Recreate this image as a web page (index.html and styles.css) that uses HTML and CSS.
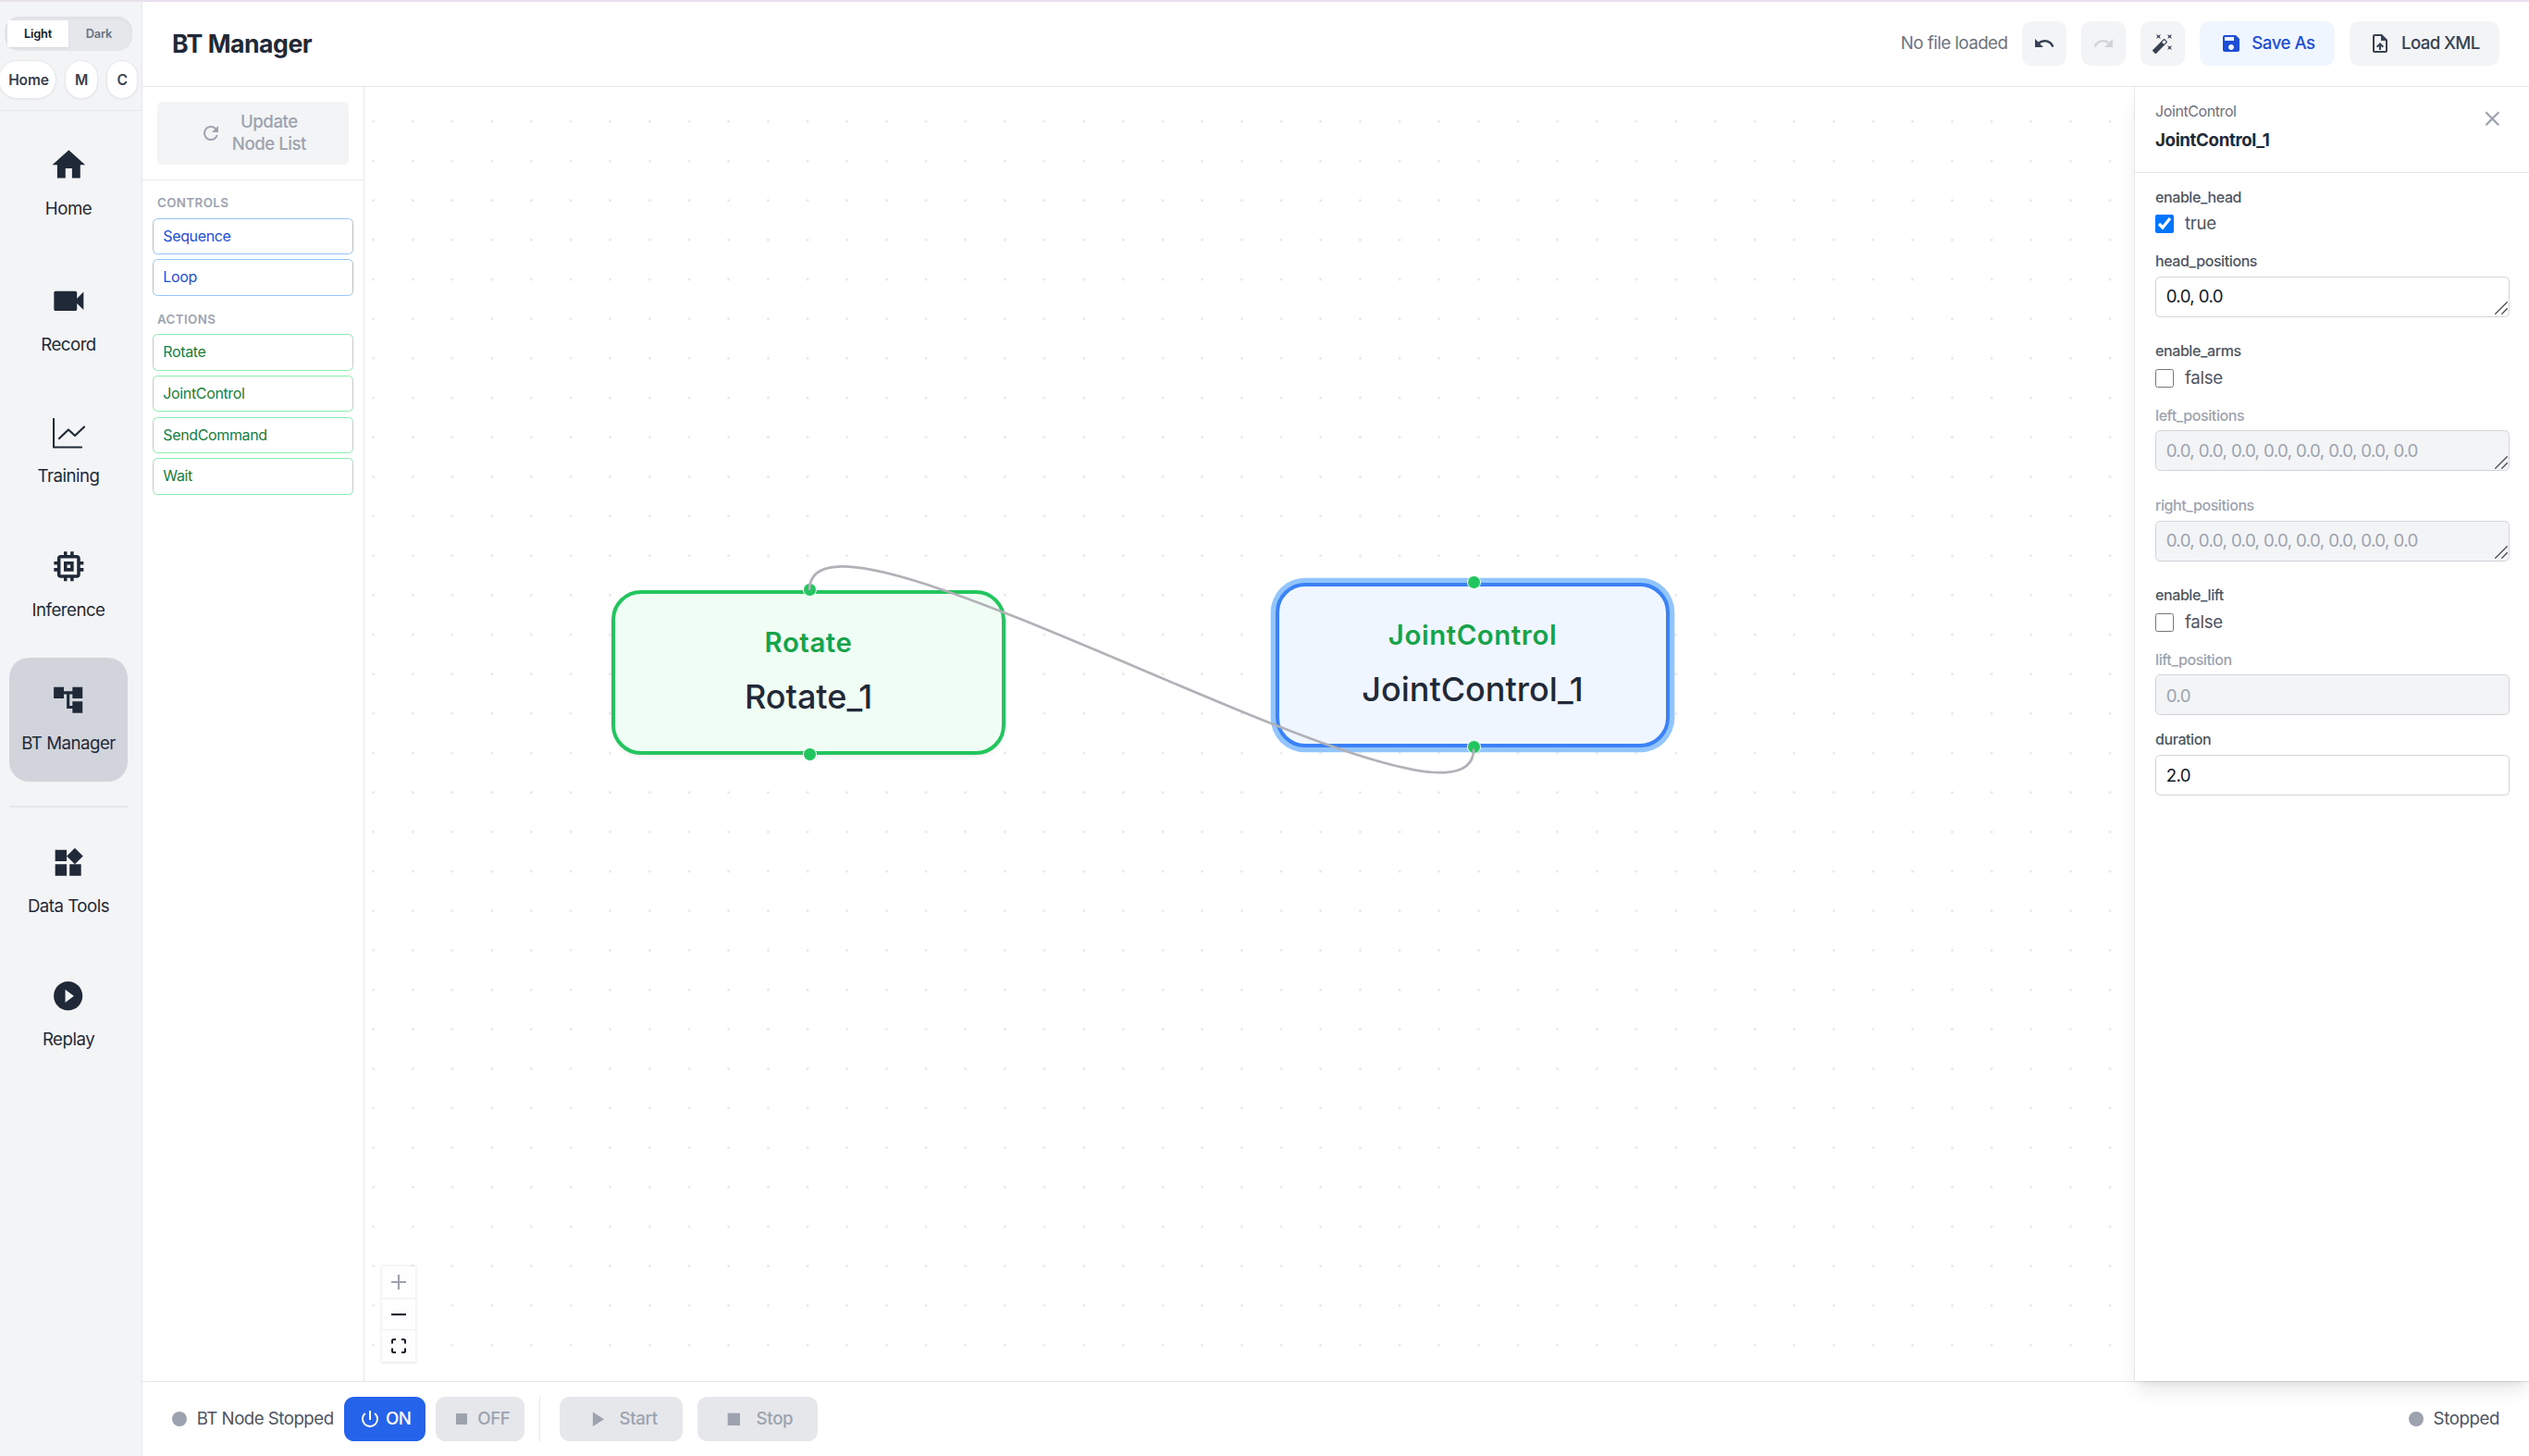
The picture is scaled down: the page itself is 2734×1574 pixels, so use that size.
FILE: index.html
```html
<!DOCTYPE html>
<html lang="en">
<head>
<meta charset="utf-8">
<title>BT Manager</title>
<link rel="stylesheet" href="styles.css">
</head>
<body>
<div class="app">
  <aside class="sidebar">
    <div class="sidebar-top">
      <div class="theme-toggle"><button class="theme-option theme-option-on">Light</button><button class="theme-option">Dark</button></div>
      <div class="chips"><a class="chip chip-home">Home</a><a class="chip chip-m">M</a><a class="chip chip-c">C</a></div>
    </div>
    <nav class="nav">
      <a class="nav-item nav-lg"><svg viewBox="0 0 24 24"><path d="M10 20v-6h4v6h5v-8h3L12 3 2 12h3v8z"/></svg><span>Home</span></a>
      <a class="nav-item nav-lg"><svg viewBox="0 0 24 24"><path d="M17 10.5V7c0-.55-.45-1-1-1H4c-.55 0-1 .45-1 1v10c0 .55.45 1 1 1h12c.55 0 1-.45 1-1v-3.5l4 4v-11l-4 4z"/></svg><span>Record</span></a>
      <a class="nav-item nav-chart"><svg viewBox="0 0 35 33" class="line-icon"><path d="M1 1v30.5h30M7 22l10-9.500 7 6.500 10-9.500"/></svg><span>Training</span></a>
      <a class="nav-item nav-lg"><svg viewBox="0 0 24 24"><path d="M15 9H9v6h6V9zm-2 4h-2v-2h2v2zm8-2V9h-2V7c0-1.1-.9-2-2-2h-2V3h-2v2h-2V3H9v2H7c-1.1 0-2 .9-2 2v2H3v2h2v2H3v2h2v2c0 1.100.9 2 2 2h2v2h2v-2h2v2h2v-2h2c1.100 0 2-.9 2-2v-2h2v-2h-2v-2h2zm-4 6H7V7h10v10z"/></svg><span>Inference</span></a>
      <a class="nav-item nav-active"><svg viewBox="0 0 24 24"><path d="M22 11V3h-7v3H9V3H2v8h7V8h2v10h4v3h7v-8h-7v3h-2V8h2v3z"/></svg><span>BT Manager</span></a>
      <hr class="nav-divider">
      <a class="nav-item"><svg viewBox="0 0 24 24"><path d="M13 13v8h8v-8h-8zM3 21h8v-8H3v8zM3 3v8h8V3H3zm13.660-1.310L11 7.340 16.660 13l5.660-5.660-5.660-5.650z"/></svg><span>Data Tools</span></a>
      <a class="nav-item"><svg viewBox="0 0 24 24"><path d="M12 2C6.480 2 2 6.480 2 12s4.480 10 10 10 10-4.480 10-10S17.520 2 12 2zm-2 14.500v-9l6 4.500-6 4.500z"/></svg><span>Replay</span></a>
    </nav>
  </aside>

  <main class="main">
    <header class="header">
      <h1>BT Manager</h1>
      <div class="toolbar">
        <span class="file-status">No file loaded</span>
        <button class="btn btn-icon"><svg viewBox="0 0 24 24"><path d="M12.500 8c-2.650 0-5.050.99-6.900 2.600L2 7v9h9l-3.620-3.620c1.390-1.160 3.160-1.880 5.120-1.880 3.540 0 6.550 2.310 7.600 5.500l2.370-.78C21.080 11.030 17.150 8 12.500 8z"/></svg></button>
        <button class="btn btn-icon btn-faded"><svg viewBox="0 0 24 24"><path d="M18.400 10.600C16.550 8.990 14.150 8 11.500 8c-4.650 0-8.580 3.030-9.960 7.220L3.900 16c1.050-3.190 4.050-5.500 7.600-5.500 1.950 0 3.730.72 5.120 1.880L13 16h9V7l-3.600 3.600z"/></svg></button>
        <button class="btn btn-icon"><svg viewBox="0 0 24 24"><path d="M7.500 5.600L10 7 8.600 4.500 10 2 7.500 3.400 5 2l1.400 2.500L5 7zm12 9.800L17 14l1.400 2.500L17 19l2.500-1.400L22 19l-1.400-2.500L22 14zM22 2l-2.500 1.400L17 2l1.400 2.500L17 7l2.500-1.400L22 7l-1.400-2.500zm-7.630 5.290a.996.996 0 0 0-1.410 0L1.290 18.960a.996.996 0 0 0 0 1.410l2.340 2.340c.39.39 1.020.39 1.410 0L16.700 11.050a.996.996 0 0 0 0-1.410l-2.330-2.350zm-1.030 5.490l-2.120-2.120 2.440-2.440 2.120 2.120-2.440 2.440z"/></svg></button>
        <button class="btn btn-save"><svg viewBox="0 0 24 24"><path d="M17 3H5a2 2 0 0 0-2 2v14a2 2 0 0 0 2 2h14c1.100 0 2-.9 2-2V7l-4-4zm-5 16c-1.660 0-3-1.340-3-3s1.340-3 3-3 3 1.340 3 3-1.340 3-3 3zm3-10H5V5h10v4z"/></svg>Save As</button>
        <button class="btn"><svg viewBox="0 0 24 24"><path d="M14 2H6c-1.100 0-1.990.9-1.990 2L4 20c0 1.100.89 2 1.990 2H18c1.100 0 2-.9 2-2V8l-6-6zm4 18H6V4h7v5h5v11zM8 15.010l1.410 1.410L11 14.840V19h2v-4.160l1.590 1.590L16 15.010 12.010 11 8 15.010z"/></svg>Load XML</button>
      </div>
    </header>

    <div class="workspace">
      <section class="palette">
        <div class="palette-top">
          <button class="update-btn"><svg viewBox="0 0 24 24"><path d="M17.650 6.350A7.958 7.958 0 0 0 12 4a8 8 0 1 0 7.730 10h-2.080A5.990 5.990 0 0 1 12 18c-3.310 0-6-2.690-6-6s2.690-6 6-6c1.660 0 3.140.69 4.220 1.780L13 11h7V4l-2.350 2.350z"/></svg><span>Update<br>Node List</span></button>
        </div>
        <div class="palette-list">
          <h2>Controls</h2>
          <div class="palette-item control">Sequence</div>
          <div class="palette-item control">Loop</div>
          <h2 class="next-group">Actions</h2>
          <div class="palette-item action">Rotate</div>
          <div class="palette-item action">JointControl</div>
          <div class="palette-item action">SendCommand</div>
          <div class="palette-item action">Wait</div>
        </div>
      </section>

      <section class="canvas">
        <svg class="canvas-grid"><defs><pattern id="dots" x="-11.660" y="16" width="42.667" height="42.667" patternUnits="userSpaceOnUse"><circle cx="21.333" cy="21.333" r="1.333"/></pattern></defs><rect width="100%" height="100%" fill="url(#dots)"/></svg>
        <div class="node node-rotate"><i class="handle handle-top"></i><b>Rotate</b><span>Rotate_1</span><i class="handle handle-bottom"></i></div>
        <div class="node node-joint"><i class="handle handle-top"></i><b>JointControl</b><span>JointControl_1</span><i class="handle handle-bottom"></i></div>
        <svg class="edges"><path d="M1199.200 715.600C1199.200 849 481 410.700 481 544"/></svg>
        <div class="zoom-controls">
          <button class="zoom-disabled"><svg viewBox="0 0 32 32"><path d="M32 18.133H18.133V32h-4.266V18.133H0v-4.266h13.867V0h4.266v13.867H32z"/></svg></button>
          <button><svg viewBox="0 0 32 32"><path d="M0 13.900h32v4.200H0z"/></svg></button>
          <button><svg viewBox="0 0 32 32"><path class="fit" d="M2 11V5q0-3 3-3h5M22 2h5q3 0 3 3v6M30 21v6q0 3-3 3h-5M10 30H5q-3 0-3-3v-6"/></svg></button>
        </div>
      </section>

      <aside class="inspector">
        <div class="inspector-head">
          <div><p>JointControl</p><h3>JointControl_1</h3></div>
          <button class="close"><svg viewBox="0 0 24 24"><path d="M19 6.410L17.590 5 12 10.590 6.410 5 5 6.410 10.590 12 5 17.590 6.410 19 12 13.410 17.590 19 19 17.590 13.410 12z"/></svg></button>
        </div>
        <form class="fields">
          <div class="field"><label>enable_head</label><div class="check"><input type="checkbox" checked>true</div></div>
          <div class="field"><label>head_positions</label><div class="area"><textarea rows="1">0.0, 0.0</textarea><svg class="grip" viewBox="0 0 14 14"><path d="M.3 13.700L13.700.3M7.300 13.700l6.400-6.400"/></svg></div></div>
          <div class="field"><label>enable_arms</label><div class="check"><input type="checkbox">false</div></div>
          <div class="field field-off"><label>left_positions</label><div class="area"><textarea rows="1" disabled>0.0, 0.0, 0.0, 0.0, 0.0, 0.0, 0.0, 0.0</textarea><svg class="grip" viewBox="0 0 14 14"><path d="M.3 13.700L13.700.3M7.300 13.700l6.400-6.400"/></svg></div></div>
          <div class="field field-off"><label>right_positions</label><div class="area"><textarea rows="1" disabled>0.0, 0.0, 0.0, 0.0, 0.0, 0.0, 0.0, 0.0</textarea><svg class="grip" viewBox="0 0 14 14"><path d="M.3 13.700L13.700.3M7.300 13.700l6.400-6.400"/></svg></div></div>
          <div class="field"><label>enable_lift</label><div class="check"><input type="checkbox">false</div></div>
          <div class="field field-off"><label>lift_position</label><input type="text" value="0.0" disabled></div>
          <div class="field"><label>duration</label><input type="text" value="2.0"></div>
        </form>
      </aside>
    </div>

    <footer class="footer">
      <div class="status"><i class="dot"></i>BT Node Stopped</div>
      <button class="run power-on"><svg viewBox="0 0 24 24"><path d="M13 3h-2v10h2V3zm4.830 2.170l-1.420 1.420A6.920 6.920 0 0 1 19 12c0 3.870-3.130 7-7 7A6.995 6.995 0 0 1 7.580 6.580L6.170 5.170A8.932 8.932 0 0 0 3 12a9 9 0 0 0 18 0c0-2.740-1.230-5.180-3.170-6.830z"/></svg>ON</button>
      <button class="run"><svg viewBox="0 0 24 24"><path d="M6 6h12v12H6z"/></svg>OFF</button>
      <i class="separator"></i>
      <button class="run run-wide"><svg viewBox="0 0 24 24"><path d="M8 5v14l11-7z"/></svg>Start</button>
      <button class="run run-wide"><svg viewBox="0 0 24 24"><path d="M6 6h12v12H6z"/></svg>Stop</button>
      <div class="status status-right"><i class="dot"></i>Stopped</div>
    </footer>
  </main>
</div>
</body>
</html>
```
FILE: styles.css
```css
html { font-size: 21.3333px; }
* { box-sizing: border-box; }
body { margin: 0; font-family: Inter, "Liberation Sans", sans-serif; font-size: .875rem; line-height: 1.25rem; letter-spacing: -.5px; color: #1f2937; background: #fff; }
h1, h2, h3, p { margin: 0; }
button { font: inherit; letter-spacing: inherit; border: 0; margin: 0; padding: 0; }
svg { fill: currentColor; flex: none; display: block; }

.app { display: flex; width: 2734px; height: 1574px; border-top: 2px solid #e8e0ea; overflow: hidden; }

/* Sidebar */
.sidebar { width: 154px; flex: none; background: #f3f4f6; border-right: 1px solid #e5e7eb; }
.sidebar-top { height: 118px; padding-top: 16px; border-bottom: 1px solid #e5e7eb; display: flex; flex-direction: column; gap: 10px; overflow: hidden; }
.theme-toggle { display: flex; width: 138px; height: 37px; margin-left: 5px; padding: 4px 3px; border-radius: 16px; background: #e5e7eb; box-shadow: inset 0 2px 4px rgba(0,0,0,.04); }
.theme-option { flex: 1; font-size: 12.8px; font-weight: 600; line-height: 27px; letter-spacing: -.2px; color: #6b7280; background: none; }
.theme-option-on { color: #111827; background: #fff; box-shadow: 0 1px 2px rgba(0,0,0,.08); }
.chips { display: flex; gap: 9px; margin-left: -2px; }
.chip { height: 42px; border: 1px solid #e5e7eb; border-radius: 21px; background: #fff; font-size: 15.500px; font-weight: 600; line-height: 41px; letter-spacing: -.3px; text-align: center; color: #374151; box-shadow: 0 1px 2px rgba(0,0,0,.05); }
.chip-home { width: 63px; padding-left: 3px; letter-spacing: -.1px; }
.chip-m { width: 36px; }
.chip-c { width: 34px; }
.nav { display: flex; flex-direction: column; gap: 10.300px; padding: 10px 15px 0 10px; }
.nav-item { height: 134px; padding-top: 27.300px; border-radius: 21.333px; display: flex; flex-direction: column; align-items: center; gap: 15.800px; white-space: nowrap; }
.nav-item svg { width: 37.333px; height: 37.333px; }
.nav-lg { height: 136.700px; gap: 13.300px; }
.nav-lg svg { width: 42.667px; height: 42.667px; }
.nav-chart { height: 129.700px; padding-top: 28.300px; gap: 16.300px; }
.nav-chart .line-icon { width: 35px; height: 33px; fill: none; stroke: currentColor; stroke-width: 2.200; stroke-linejoin: round; stroke-linecap: round; }
.nav-active { background: #d1d5db; }
.nav-divider { width: 128px; height: 2px; margin: 16px 0 3px; border: 0; border-radius: 2px; background: #e5e7eb; }

/* Header */
.main { flex: 1; display: flex; flex-direction: column; min-width: 0; }
.header { flex: none; display: flex; align-items: center; justify-content: space-between; padding: 1rem 1.5rem; border-bottom: 1px solid #e5e7eb; }
.header h1 { font-size: 1.25rem; line-height: 1.75rem; font-weight: 700; }
.toolbar { display: flex; align-items: center; gap: .75rem; }
.file-status { color: #6b7280; }
.btn { display: flex; align-items: center; gap: .5rem; height: 48px; padding: 0 1rem; border-radius: .5rem; background: #f3f4f6; color: #374151; font-weight: 500; letter-spacing: -.63px; }
.btn svg { width: 24px; height: 24px; }
.btn-icon { padding: 0 12px; }
.btn-faded { color: #d1d5db; }
.btn-save { background: #eff6ff; color: #1d4ed8; letter-spacing: -.5px; }

/* Node palette */
.workspace { flex: 1; display: flex; min-height: 0; }
.palette { width: 240px; flex: none; border-right: 1px solid #e5e7eb; }
.palette-top { padding: 16px; border-bottom: 1px solid #e5e7eb; }
.update-btn { width: 100%; height: 68px; display: flex; align-items: center; justify-content: center; gap: .5rem; border-radius: 5.333px; background: #f3f4f6; color: #9ca3af; font-weight: 500; line-height: 24px; }
.update-btn svg { width: 24px; height: 24px; }
.palette-list { padding: .5rem; display: flex; flex-direction: column; gap: .25rem; }
.palette-list h2 { padding: 4px .25rem 1px; font-size: 13.333px; line-height: 20px; font-weight: 600; letter-spacing: .4px; text-transform: uppercase; color: #9ca3af; }
.palette-list .next-group { margin-top: 6px; }
.palette-item { height: 39.330px; padding: 0 .5rem; border: 1px solid; border-radius: .25rem; font-size: .75rem; letter-spacing: -.35px; line-height: 38px; }
.control { color: #1d4ed8; border-color: #93c5fd; }
.action { color: #15803d; border-color: #86efac; }

/* Canvas */
.canvas { flex: 1; position: relative; min-width: 0; letter-spacing: 0; }
.canvas-grid { position: absolute; inset: 0; width: 100%; height: 100%; fill: #e2e2e4; }
.edges { position: absolute; inset: 0; width: 100%; height: 100%; fill: none; stroke: #b1b1b7; stroke-width: 2.667; }
.node { position: absolute; width: 426px; height: 178px; padding-top: 33.500px; border: 4px solid #22c55e; border-radius: 32px; background: #f0fdf4; box-shadow: 0 2.667px 5px rgba(0,0,0,.05); display: flex; flex-direction: column; align-items: center; }
.node b { font-size: 29.333px; line-height: 40px; font-weight: 600; letter-spacing: .6px; color: #16a34a; }
.node span { margin-top: 11.500px; font-size: 36px; line-height: 52px; font-weight: 500; }
.node-rotate { left: 267px; top: 544.300px; }
.node-joint { left: 985px; top: 536.300px; border-color: #3b82f6; background: #eff6ff; box-shadow: 0 0 0 5.333px #93c5fd; }
.handle { position: absolute; left: 50%; width: 15px; height: 15px; margin-left: -6.500px; border: 1.500px solid #fff; border-radius: 50%; background: #22c55e; }
.handle-top { top: -11.500px; }
.handle-bottom { bottom: -11.500px; }
.zoom-controls { position: absolute; left: 19px; bottom: 20px; width: 36px; box-shadow: 0 0 3px 1px rgba(0,0,0,.08); }
.zoom-controls button { display: flex; align-items: center; justify-content: center; width: 36px; height: 34.670px; background: #fefefe; border-bottom: 1px solid #eee; color: #111827; }
.zoom-controls svg { width: 16px; height: 16px; }
.zoom-controls .zoom-disabled { color: #9ca3af; }
.fit { fill: none; stroke: currentColor; stroke-width: 4; }

/* Inspector */
.inspector { position: relative; width: 427px; flex: none; border-left: 1px solid #e5e7eb; background: #fff; box-shadow: 0 13px 20px -4px rgba(0,0,0,.1), 0 5px 8px -5px rgba(0,0,0,.1); }
.inspector-head { display: flex; justify-content: space-between; align-items: flex-start; height: 93px; padding: 16px 1rem 0 22px; border-bottom: 1px solid #e5e7eb; }
.inspector-head p { font-size: .75rem; line-height: 1rem; letter-spacing: -.4px; color: #6b7280; }
.inspector-head h3 { margin-top: 8.500px; font-size: .875rem; line-height: 1.25rem; font-weight: 700; letter-spacing: -.35px; }
.close { margin: 5px 5.333px 0 0; background: none; color: #9ca3af; }
.close svg { width: 26.667px; height: 26.667px; }
.fields { display: flex; flex-direction: column; gap: 16px; padding: 16px 21.333px 16px 22px; }
.field { display: flex; flex-direction: column; gap: 5.333px; }
.field label { font-size: .75rem; line-height: 1rem; font-weight: 500; letter-spacing: -.4px; color: #4b5563; }
.field-off label { color: #9ca3af; }
.check { display: flex; align-items: center; gap: 12px; height: 25px; margin-bottom: 1.670px; padding-top: 1px; color: #4b5563; letter-spacing: -.3px; }
.check input { width: 20px; height: 20px; margin: 0; }
.field textarea, .field input[type=text] { display: block; width: 100%; height: 44px; padding: 8.500px 10.667px 6.500px; border: 1px solid #d1d5db; border-radius: 5.333px; background: #fff; font: inherit; letter-spacing: -.6px; color: #111827; overflow: hidden; resize: none; }
.area { position: relative; margin-bottom: 10.667px; }
.grip { position: absolute; right: 2px; bottom: 2.500px; width: 14px; height: 14px; fill: none; stroke: #4a4a4a; stroke-width: 1.300; }
.field textarea:disabled, .field input[type=text]:disabled { background: #f3f4f6; color: #9ca3af; }

/* Footer */
.footer { flex: none; display: flex; align-items: center; height: 81px; padding: 0 1.5rem; border-top: 1px solid #e5e7eb; }
.status { display: flex; align-items: center; gap: 10.667px; margin-right: 11px; color: #4b5563; }
.status-right { margin: 0 0 0 auto; letter-spacing: -.4px; }
.dot { width: 16px; height: 16px; border-radius: 50%; background: #9ca3af; }
.run { display: flex; align-items: center; gap: 5.333px; height: 48px; padding: 0 16px; margin-right: 10.667px; border-radius: .5rem; background: #e5e7eb; color: #9ca3af; font-weight: 500; }
.run svg { width: 24px; height: 24px; }
.power-on { background: #2563eb; color: #fff; }
.separator { width: 1px; height: 48px; margin: 0 21.333px 0 5.333px; background: #e5e7eb; }
.run-wide { gap: .5rem; padding: 0 1.25rem; margin-right: 16px; letter-spacing: -.3px; }
.run-wide svg { width: 26.667px; height: 26.667px; }
```
